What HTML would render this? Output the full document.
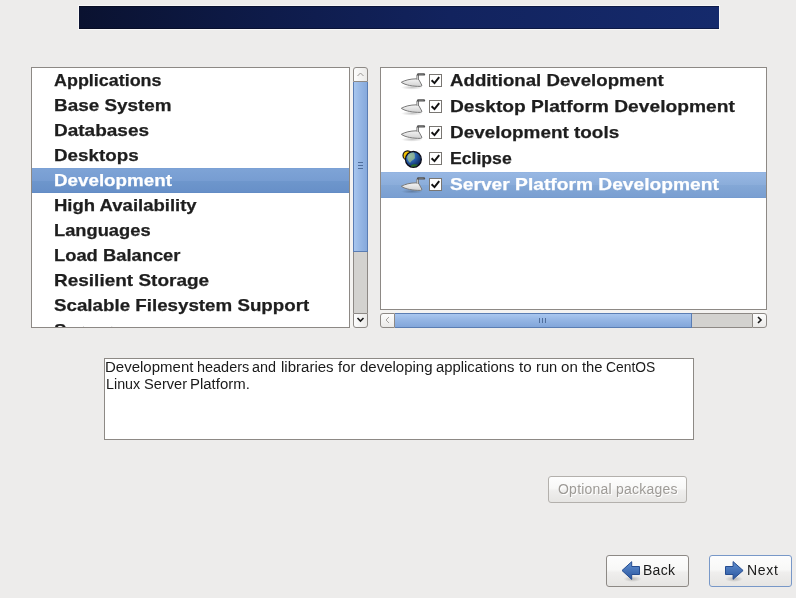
<!DOCTYPE html>
<html><head><meta charset="utf-8">
<style>
html,body{margin:0;padding:0;}
body{width:796px;height:598px;overflow:hidden;background:#edeceb;position:relative;font-family:"Liberation Sans",sans-serif;}
.a{position:absolute;}
#banner{left:79px;top:6px;width:640px;height:23px;background:linear-gradient(90deg,#0a1230 0%,#0e1b4a 30%,#12235e 58%,#152a6c 100%);box-shadow:0 0 0 1px rgba(255,255,255,0.6),inset 0 1px 0 rgba(0,0,10,0.35),inset 0 -1px 0 rgba(0,0,10,0.35);}
.list{background:#fff;border:1px solid #8d8985;box-sizing:border-box;}
.band{background:#f4f3f1;}
.t{position:absolute;white-space:pre;font-weight:bold;font-size:17px;line-height:20px;color:#1e1e1e;transform-origin:0 0;-webkit-text-stroke:0.25px currentColor;}
.sel{position:absolute;background:linear-gradient(#789fd4 0,#7ea3d6 4%,#779dd2 50%,#6e96cc 52%,#6790c8 96%,#5f88c2 100%);}
.sel2{position:absolute;background:linear-gradient(#8eb0df 0,#97b7e3 4%,#8badda 50%,#83a7d6 52%,#7a9fd1 96%,#7098cd 100%);}
.w{color:#fff;}
.cb{position:absolute;width:13px;height:13px;box-sizing:border-box;border:1px solid #797672;background:#fff;}
.cb svg{position:absolute;left:0;top:0;}
.btn{position:absolute;box-sizing:border-box;border:1px solid #8d8985;border-radius:3px;background:linear-gradient(#fdfdfd,#f8f8f7 45%,#efeeed 55%,#e6e5e3);}
.bt{position:absolute;white-space:pre;font-size:14px;line-height:16px;color:#1a1a1a;}
</style></head><body><div style="position:absolute;left:0;top:0;width:796px;height:598px;will-change:transform">
<svg width="0" height="0" style="position:absolute">
<defs>
<linearGradient id="tg" x1="0" y1="0" x2="0" y2="1"><stop offset="0" stop-color="#f4f4f4"/><stop offset="1" stop-color="#d2d2d2"/></linearGradient>
<radialGradient id="shd" cx="0.5" cy="0.5" r="0.5"><stop offset="0" stop-color="rgba(0,0,0,0.22)"/><stop offset="1" stop-color="rgba(0,0,0,0)"/></radialGradient>
<radialGradient id="globe" cx="0.3" cy="0.28" r="0.8"><stop offset="0" stop-color="#9acbee"/><stop offset="0.4" stop-color="#2a66b6"/><stop offset="1" stop-color="#082050"/></radialGradient>
<g id="trowel">
<ellipse cx="14" cy="17.5" rx="11" ry="2.2" fill="url(#shd)"/>
<path d="M3.3 12.3 C7 10.2 12 8.9 18.6 8.8 L20.8 9.6 L23.8 15.1 Q24 16.4 22.5 16.4 C15 16.4 7.5 15.3 3.3 12.3 Z" fill="url(#tg)" stroke="#7a7a7a" stroke-width="1"/>
<path d="M18.9 9.6 L18.9 4.8 L20.5 4.8 L20.5 10" fill="#f4f4f4" stroke="#7a7a7a" stroke-width="1"/>
<path d="M20.2 4.4 L25.9 4.4" stroke="#505050" stroke-width="2.4" stroke-linecap="round"/>
<path d="M20.7 4.3 L25.6 4.3" stroke="#8a8a8a" stroke-width="0.7"/>
</g>
</defs></svg>
<div id="banner" class="a"></div>

<!-- left list -->
<div class="a list" style="left:31px;top:67px;width:319px;height:261px;"></div>
<div class="a band" style="left:350px;top:67px;width:3px;height:261px;"></div>
<div class="sel" style="left:32px;top:168px;width:317px;height:25px;"></div>
<div class="t" style="left:54px;top:71px;transform:scaleX(1.0539);">Applications</div>
<div class="t" style="left:54px;top:96px;transform:scaleX(1.1115);">Base System</div>
<div class="t" style="left:54px;top:121px;transform:scaleX(1.1179);">Databases</div>
<div class="t" style="left:54px;top:146px;transform:scaleX(1.1053);">Desktops</div>
<div class="t w" style="left:54px;top:171px;transform:scaleX(1.1047);">Development</div>
<div class="t" style="left:54px;top:196px;transform:scaleX(1.0892);">High Availability</div>
<div class="t" style="left:54px;top:221px;transform:scaleX(1.0761);">Languages</div>
<div class="t" style="left:54px;top:246px;transform:scaleX(1.0793);">Load Balancer</div>
<div class="t" style="left:54px;top:271px;transform:scaleX(1.1174);">Resilient Storage</div>
<div class="t" style="left:54px;top:296px;transform:scaleX(1.1026);">Scalable Filesystem Support</div>
<div class="a" style="left:32px;top:318px;width:317px;height:9px;overflow:hidden;"><div class="t" style="left:22px;top:3px;transform:scaleX(1.1000);">Server</div></div>

<!-- vertical scrollbar -->
<div class="a" style="left:353px;top:67px;width:15px;height:261px;">
  <div class="a" style="left:0;top:0;width:15px;height:15px;box-sizing:border-box;border:1px solid #8d8985;border-radius:3px 3px 0 0;background:linear-gradient(90deg,#fdfdfd,#ebeae8);"></div>
  <svg class="a" style="left:0;top:0" width="15" height="15"><path d="M4.5 9 L7.5 6 L10.5 9" fill="none" stroke="#9a9794" stroke-width="1"/></svg>
  <div class="a" style="left:0;top:15px;width:15px;height:170px;box-sizing:border-box;border:1px solid #5a7db3;border-top:none;background:linear-gradient(90deg,#a7c6ee,#95b6e4 50%,#86a9dc);"></div>
  <div class="a" style="left:5px;top:95px;width:5px;height:1px;background:#4f6e9c"></div>
  <div class="a" style="left:5px;top:98px;width:5px;height:1px;background:#4f6e9c"></div>
  <div class="a" style="left:5px;top:101px;width:5px;height:1px;background:#4f6e9c"></div>
  <div class="a" style="left:0;top:185px;width:15px;height:61px;box-sizing:border-box;border-left:1px solid #8d8985;border-right:1px solid #8d8985;background:#d3d2cf;"></div>
  <div class="a" style="left:0;top:246px;width:15px;height:15px;box-sizing:border-box;border:1px solid #8d8985;border-radius:0 0 3px 3px;background:linear-gradient(90deg,#fdfdfd,#ebeae8);"></div>
  <svg class="a" style="left:0;top:246px" width="15" height="14"><path d="M4.5 5 L7.5 8 L10.5 5" fill="none" stroke="#1a1a1a" stroke-width="1.6"/></svg>
</div>

<!-- right list -->
<div class="a list" style="left:380px;top:67px;width:387px;height:243px;"></div>
<div class="a band" style="left:380px;top:310px;width:387px;height:3px;"></div>
<div class="sel2" style="left:381px;top:172px;width:385px;height:26px;"></div>

<div class="t" style="left:450px;top:71px;transform:scaleX(1.0985);">Additional Development</div>
<div class="t" style="left:450px;top:97px;transform:scaleX(1.1291);">Desktop Platform Development</div>
<div class="t" style="left:450px;top:123px;transform:scaleX(1.1126);">Development tools</div>
<div class="t" style="left:450px;top:149px;transform:scaleX(1.0362);">Eclipse</div>
<div class="t w" style="left:450px;top:175px;transform:scaleX(1.1290);">Server Platform Development</div>

<svg class="a" style="left:398px;top:70px" width="30" height="22"><use href="#trowel"/></svg><svg class="a" style="left:398px;top:96px" width="30" height="22"><use href="#trowel"/></svg><svg class="a" style="left:398px;top:122px" width="30" height="22"><use href="#trowel"/></svg><svg class="a" style="left:398px;top:174px" width="30" height="22"><use href="#trowel"/></svg><svg class="a" style="left:398px;top:146px" width="30" height="26">
<circle cx="9.6" cy="9.4" r="4.6" fill="#f2c200" stroke="#151515" stroke-width="1.2"/>
<circle cx="15.4" cy="13.4" r="7.9" fill="url(#globe)" stroke="#0d0d18" stroke-width="1.3"/>
<path d="M9.5 11 C10 8 12.5 6.6 15.5 6.5 C17.5 7.5 16.5 10 17 12 C16 14 13 14.5 12 17 C10.5 15.5 9.2 13.5 9.5 11 Z" fill="#95b88c" opacity="0.8"/>
<path d="M13 19.5 C15 17.8 18 18.2 20 18.8 C18.5 20.6 16 21.2 13 20.5 Z" fill="#2a6a2a"/>
</svg>
<div class="cb" style="left:429px;top:74px;"><svg width="11" height="11"><path d="M1.6 5.3 L4.5 8.1 L9.2 2.1" fill="none" stroke="#111" stroke-width="2"/></svg></div>
<div class="cb" style="left:429px;top:100px;"><svg width="11" height="11"><path d="M1.6 5.3 L4.5 8.1 L9.2 2.1" fill="none" stroke="#111" stroke-width="2"/></svg></div>
<div class="cb" style="left:429px;top:126px;"><svg width="11" height="11"><path d="M1.6 5.3 L4.5 8.1 L9.2 2.1" fill="none" stroke="#111" stroke-width="2"/></svg></div>
<div class="cb" style="left:429px;top:152px;"><svg width="11" height="11"><path d="M1.6 5.3 L4.5 8.1 L9.2 2.1" fill="none" stroke="#111" stroke-width="2"/></svg></div>
<div class="cb" style="left:429px;top:178px;"><svg width="11" height="11"><path d="M1.6 5.3 L4.5 8.1 L9.2 2.1" fill="none" stroke="#111" stroke-width="2"/></svg></div>

<!-- horizontal scrollbar -->
<div class="a" style="left:380px;top:313px;width:387px;height:15px;">
  <div class="a" style="left:0;top:0;width:15px;height:15px;box-sizing:border-box;border:1px solid #8d8985;border-radius:3px 0 0 3px;background:linear-gradient(#fdfdfd,#ebeae8);"></div>
  <svg class="a" style="left:0;top:0" width="15" height="15"><path d="M9 4 L6 7 L9 10" fill="none" stroke="#a5a29f" stroke-width="1"/></svg>
  <div class="a" style="left:15px;top:0;width:297px;height:15px;box-sizing:border-box;border:1px solid #5a7db3;border-left:none;background:linear-gradient(#a9c7ef,#93b4e3 50%,#82a6da);"></div>
  <div class="a" style="left:159px;top:5px;width:1px;height:5px;background:#4f6e9c"></div>
  <div class="a" style="left:162px;top:5px;width:1px;height:5px;background:#4f6e9c"></div>
  <div class="a" style="left:165px;top:5px;width:1px;height:5px;background:#4f6e9c"></div>
  <div class="a" style="left:312px;top:0;width:60px;height:15px;box-sizing:border-box;border-top:1px solid #8d8985;border-bottom:1px solid #8d8985;background:#d3d2cf;"></div>
  <div class="a" style="left:372px;top:0;width:15px;height:15px;box-sizing:border-box;border:1px solid #8d8985;border-radius:0 3px 3px 0;background:linear-gradient(#fdfdfd,#ebeae8);"></div>
  <svg class="a" style="left:372px;top:0" width="15" height="15"><path d="M6 4 L9 7 L6 10" fill="none" stroke="#1a1a1a" stroke-width="1.6"/></svg>
</div>

<!-- description -->
<div class="a list" style="left:104px;top:358px;width:590px;height:82px;"></div>
<div class="bt" style="left:105px;top:359px;transform:scaleX(1.0716);transform-origin:0 0;">Development</div>
<div class="bt" style="left:196.8px;top:359px;transform:scaleX(1.0327);transform-origin:0 0;">headers</div>
<div class="bt" style="left:252.4px;top:359px;transform:scaleX(1.0273);transform-origin:0 0;">and</div>
<div class="bt" style="left:280.9px;top:359px;transform:scaleX(1.0729);transform-origin:0 0;">libraries</div>
<div class="bt" style="left:338.4px;top:359px;transform:scaleX(1.0625);transform-origin:0 0;">for</div>
<div class="bt" style="left:359.7px;top:359px;transform:scaleX(1.0712);transform-origin:0 0;">developing</div>
<div class="bt" style="left:435.5px;top:359px;transform:scaleX(1.0603);transform-origin:0 0;">applications</div>
<div class="bt" style="left:519.4px;top:359px;transform:scaleX(1.0818);transform-origin:0 0;">to</div>
<div class="bt" style="left:535.6px;top:359px;transform:scaleX(1.0474);transform-origin:0 0;">run</div>
<div class="bt" style="left:560.5px;top:359px;transform:scaleX(1.0786);transform-origin:0 0;">on</div>
<div class="bt" style="left:581.6px;top:359px;transform:scaleX(1.0579);transform-origin:0 0;">the</div>
<div class="bt" style="left:605.5px;top:359px;transform:scaleX(0.9896);transform-origin:0 0;">CentOS</div>
<div class="bt" style="left:105.5px;top:376px;transform:scaleX(1.0219);transform-origin:0 0;">Linux</div>
<div class="bt" style="left:143.5px;top:376px;transform:scaleX(1.0450);transform-origin:0 0;">Server</div>
<div class="bt" style="left:190.3px;top:376px;transform:scaleX(1.0685);transform-origin:0 0;">Platform.</div>

<!-- optional packages -->
<div class="btn" style="left:548px;top:476px;width:139px;height:27px;border-color:#b3b0ac;"></div>
<div class="bt" style="left:559px;top:482px;color:#ffffff;letter-spacing:0.225px;">Optional packages</div>
<div class="bt" style="left:558px;top:481px;color:#9d9a96;letter-spacing:0.225px;">Optional packages</div>

<!-- back -->
<div class="btn" style="left:606px;top:555px;width:83px;height:32px;"></div>
<svg class="a" style="left:620px;top:560px" width="24" height="24">
  <defs><linearGradient id="ga" x1="0" y1="0" x2="0" y2="1"><stop offset="0" stop-color="#6190d0"/><stop offset="1" stop-color="#2a559f"/></linearGradient></defs>
  <ellipse cx="12.5" cy="19" rx="9" ry="3" fill="url(#shd)"/>
  <path d="M2 10.5 L11.7 1.7 L11.7 6.5 L19.5 6.5 L19.5 14.5 L11.7 14.5 L11.7 19.4 Z" fill="url(#ga)" stroke="#254c90" stroke-width="1" stroke-linejoin="miter"/>
</svg>
<div class="bt" style="left:643px;top:562px;letter-spacing:0.267px;">Back</div>

<!-- next -->
<div class="btn" style="left:709px;top:555px;width:83px;height:32px;border-color:#7898c8;"></div>
<svg class="a" style="left:723px;top:560px" width="24" height="24">
  <ellipse cx="11" cy="19" rx="9" ry="3" fill="url(#shd)"/>
  <path d="M20.1 10.5 L10.1 1.6 L10.1 6.5 L2.5 6.5 L2.5 14.5 L10.1 14.5 L10.1 19.3 Z" fill="url(#ga)" stroke="#254c90" stroke-width="1" stroke-linejoin="miter"/>
</svg>
<div class="bt" style="left:747px;top:562px;letter-spacing:0.733px;">Next</div>

</div></body></html>
